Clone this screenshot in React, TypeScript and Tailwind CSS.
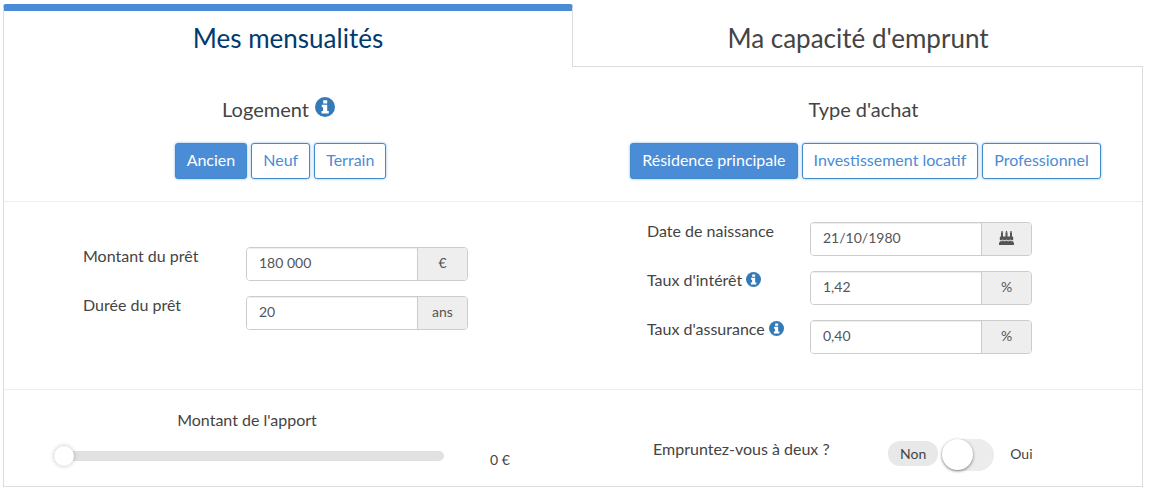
import { useId, useState } from "react";
import type { ReactNode } from "react";

function InfoIcon({ className }: { className: string }) {
  return (
    <svg viewBox="0 0 20 20" className={className} role="img" aria-label="Information">
      <circle cx="10" cy="10" r="10" fill="#337ab7" />
      <path d="M8.2 3.2h4v3.2h-4zM6.8 7.8h5.4v6.3h1.6v2.4H6.5v-2.4h1.6v-3.9H6.8z" fill="#fff" />
    </svg>
  );
}

function CakeIcon() {
  return (
    <svg viewBox="0 0 15 14" className="h-3.5 w-[15px]" fill="#555" aria-hidden="true">
      <path d="M2.4 0h1.2v1H2.4zM6.9 0h1.2v1H6.9zM11.4 0h1.2v1h-1.2zM2 1.3h2V6H2zM6.5 1.3h2V6h-2zM11 1.3h2V6h-2z" />
      <path d="M1.6 5.4h11.8q.8 0 .8.8v2.6l-1.3.8-1.8-1.1-1.8 1.1-1.8-1.1-1.8 1.1-1.8-1.1-1.8 1.1-1.3-.8V6.2q0-.8.8-.8z" />
      <path d="M.8 10l1.3.4 1.8-.9 1.8.9 1.8-.9 1.8.9 1.8-.9 1.8.9 1.3-.4v1.4H15V14H0v-2.6h.8z" />
    </svg>
  );
}

function ChoiceGroup({ label, options }: { label: string; options: string[] }) {
  const [selected, setSelected] = useState(options[0]);
  return (
    <div role="group" aria-label={label} className="mt-5 flex justify-center gap-1">
      {options.map((option) => (
        <button
          key={option}
          type="button"
          aria-pressed={option === selected}
          onClick={() => setSelected(option)}
          className={`h-9 rounded-[3px] border border-[#428bca] px-[11px] pb-0.5 text-base leading-5 whitespace-nowrap shadow-[0_0_3px_#8fbbe6] ${
            option === selected ? "bg-[#4a8cd6] text-white" : "bg-white text-[#4a8cd6]"
          }`}
        >
          {option}
        </button>
      ))}
    </div>
  );
}

function Field({ label, value, unit, info }: { label: string; value: string; unit: ReactNode; info?: boolean }) {
  const id = useId();
  return (
    <div className="flex">
      <div className="flex h-[18px] w-[163px] items-center gap-1 whitespace-nowrap">
        <label htmlFor={id} className="text-base leading-[18px]">
          {label}
        </label>
        {info && <InfoIcon className="mb-0.5 h-[15px] w-[15px]" />}
      </div>
      <div className="flex h-[34px] w-[222px] overflow-hidden rounded-[4px] border border-[#ccc] text-sm text-[#555]">
        <input
          id={id}
          type="text"
          defaultValue={value}
          className="min-w-0 flex-1 bg-white px-3 pb-0.5 shadow-[inset_0_1px_1px_rgba(0,0,0,0.075)] outline-none"
        />
        <span className="flex w-[50px] items-center justify-center border-l border-[#ccc] bg-[#eee] pb-0.5">{unit}</span>
      </div>
    </div>
  );
}

export default function App() {
  const [tab, setTab] = useState(0);
  const [deposit, setDeposit] = useState(0);
  const [two, setTwo] = useState(false);
  const tabs = ["Mes mensualités", "Ma capacité d'emprunt"];

  return (
    <main className="bg-white pt-1 pr-1.5 pb-0.5 pl-[3px] font-['Lato','Open_Sans',sans-serif] text-[#444]">
      <div role="tablist" className="grid grid-cols-2">
        {tabs.map((name, i) => (
          <button
            key={name}
            type="button"
            role="tab"
            aria-selected={tab === i}
            onClick={() => setTab(i)}
            className={`text-[26px] leading-8 ${
              tab === i
                ? "rounded-t-[3px] border-x border-t-7 border-x-[#ddd] border-t-[#4a8cd6] pt-[11px] pb-[13px] text-[#003a70]"
                : "border-b border-[#ddd] pt-[18px] pb-3"
            }`}
          >
            {name}
          </button>
        ))}
      </div>

      <div className="border-x border-b border-[#ddd]">
        <section className="grid grid-cols-2 border-b border-[#eee] pt-7 pb-[22px]">
          <div className="pr-4">
            <h2 className="flex items-center justify-center gap-1.5 pr-1 text-xl leading-7">
              Logement <InfoIcon className="mb-1 h-5 w-5" />
            </h2>
            <ChoiceGroup label="Logement" options={["Ancien", "Neuf", "Terrain"]} />
          </div>
          <div className="pl-4">
            <h2 className="pr-1 text-center text-xl leading-7">Type d'achat</h2>
            <ChoiceGroup
              label="Type d'achat"
              options={["Résidence principale", "Investissement locatif", "Professionnel"]}
            />
          </div>
        </section>

        <section className="grid grid-cols-2 items-center border-b border-[#eee] pt-5 pb-[35px]">
          <div className="flex flex-col gap-[15px] pl-[79px]">
            <Field label="Montant du prêt" value="180 000" unit="€" />
            <Field label="Durée du prêt" value="20" unit="ans" />
          </div>
          <div className="flex flex-col gap-[15px] pl-[74px]">
            <Field label="Date de naissance" value="21/10/1980" unit={<CakeIcon />} />
            <Field label="Taux d'intérêt" value="1,42" unit="%" info />
            <Field label="Taux d'assurance" value="0,40" unit="%" info />
          </div>
        </section>

        <section className="grid grid-cols-2">
          <div className="flex items-end py-5 pl-[50px]">
            <div className="flex w-[390px] flex-col gap-4">
              <label htmlFor="apport" className="pr-1 text-center text-base leading-5">
                Montant de l'apport
              </label>
              <input
                id="apport"
                type="range"
                min={0}
                max={180000}
                step={1000}
                value={deposit}
                onChange={(e) => setDeposit(Number(e.target.value))}
                className="h-5 w-full appearance-none bg-transparent [&::-webkit-slider-runnable-track]:h-2.5 [&::-webkit-slider-runnable-track]:rounded-full [&::-webkit-slider-runnable-track]:bg-[#e1e1e1] [&::-webkit-slider-thumb]:-mt-[5px] [&::-webkit-slider-thumb]:h-5 [&::-webkit-slider-thumb]:w-5 [&::-webkit-slider-thumb]:appearance-none [&::-webkit-slider-thumb]:rounded-full [&::-webkit-slider-thumb]:bg-white [&::-webkit-slider-thumb]:shadow-[0_0_4px_rgba(0,0,0,0.25)]"
              />
            </div>
            <output htmlFor="apport" className="pl-[46px] text-sm leading-3">
              {deposit.toLocaleString("fr-FR")} €
            </output>
          </div>
          <div className="flex items-center pt-[34px] pl-20">
            <label htmlFor="deux" className="w-[235px] pb-3 text-base leading-5">
              Empruntez-vous à deux ?
            </label>
            <span className={`mb-1 rounded-xl px-3 text-sm leading-[25px] ${two ? "" : "bg-[#e8e8e8]"}`}>Non</span>
            <label className="mx-1 block h-8 w-[52px] rounded-full bg-[#ececec]">
              <input
                id="deux"
                type="checkbox"
                role="switch"
                aria-label="Empruntez-vous à deux ?"
                checked={two}
                onChange={(e) => setTwo(e.target.checked)}
                className="peer sr-only"
              />
              <span className="block h-[31px] w-[31px] rounded-full bg-white shadow-[0_1px_3px_rgba(0,0,0,0.5)] transition-transform peer-checked:translate-x-[21px]" />
            </label>
            <span className={`mb-1 rounded-xl px-3 text-sm leading-[25px] ${two ? "bg-[#e8e8e8]" : ""}`}>Oui</span>
          </div>
        </section>
      </div>
    </main>
  );
}
